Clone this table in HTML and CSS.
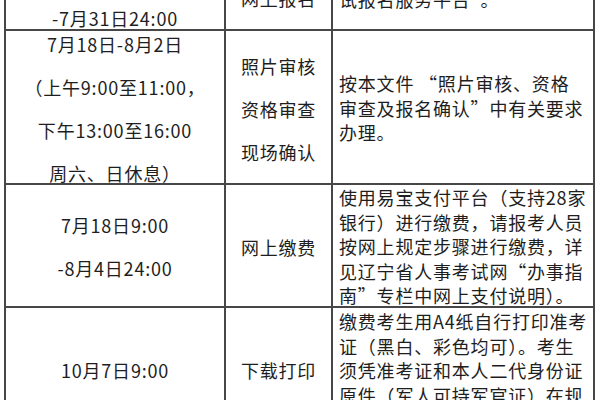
FILE: index.html
```html
<!DOCTYPE html>
<html lang="zh-CN">
<head>
<meta charset="utf-8">
<title>报名流程</title>
<link rel="stylesheet" href="styles.css">
</head>
<body>
<div class="sheet">
  <div class="cell c1 r1">
    <div class="ln43">7月18日9:00</div>
    <div class="ln43">-7月31日24:00</div>
  </div>
  <div class="cell c2 r1">
    <div class="ln43">网上报名</div>
  </div>
  <div class="cell c3 r1">
    <div class="ln25">请登录网站“辽宁省人事考<br>试报名服务平台”。</div>
  </div>

  <div class="cell c1 r2">
    <div class="ln43">7月18日-8月2日</div>
    <div class="ln43">（上午9:00至11:00，</div>
    <div class="ln43">下午13:00至16:00</div>
    <div class="ln43">周六、日休息）</div>
  </div>
  <div class="cell c2 r2">
    <div class="ln43">照片审核</div>
    <div class="ln43">资格审查</div>
    <div class="ln43">现场确认</div>
  </div>
  <div class="cell c3 r2">
    <div class="ln25">按本文件 “照片审核、资格<br>审查及报名确认”中有关要求<br>办理。</div>
  </div>

  <div class="cell c1 r3">
    <div class="ln43">7月18日9:00</div>
    <div class="ln43">-8月4日24:00</div>
  </div>
  <div class="cell c2 r3">
    <div class="ln43">网上缴费</div>
  </div>
  <div class="cell c3 r3">
    <div class="ln25">使用易宝支付平台（支持28家<br>银行）进行缴费，请报考人员<br>按网上规定步骤进行缴费，详<br>见辽宁省人事考试网“办事指<br>南”专栏中网上支付说明）。</div>
  </div>

  <div class="cell c1 r4">
    <div class="ln43">10月7日9:00</div>
  </div>
  <div class="cell c2 r4">
    <div class="ln43">下载打印</div>
  </div>
  <div class="cell c3 r4">
    <div class="ln25">缴费考生用A4纸自行打印准考<br>证（黑白、彩色均可）。考生<br>须凭准考证和本人二代身份证<br>原件（军人可持军官证）在规<br>定时间、地点参加考试。</div>
  </div>
</div>
</body>
</html>
```

FILE: styles.css
```css
html, body {
  margin: 0;
  padding: 0;
  background: #ffffff;
}

body {
  width: 600px;
  height: 400px;
  overflow: hidden;
  font-family: "Noto Sans CJK SC", "Noto Sans", sans-serif;
  font-size: 18px;
  letter-spacing: 0.8px;
  color: #1e1e1e;
}

.sheet {
  display: grid;
  grid-template-columns: 218px 105px 260px;
  grid-template-rows: 67px 152px 121px 124px;
  gap: 2px;
  padding: 2px;
  width: max-content;
  margin: -40px 0 0 4px;
  background: #474747;
}

.cell {
  background: #ffffff;
  display: flex;
  flex-direction: column;
  justify-content: center;
  min-height: 0;
  white-space: nowrap;
}

.c1, .c2 {
  align-items: center;
  text-align: center;
}

.c3 {
  padding-left: 6px;
  text-align: left;
}

.ln43 {
  line-height: 43px;
}

.ln25 {
  line-height: 24.5px;
}

.r1.c1 { padding-top: 2px; }
.r1.c2 { padding-top: 5px; }
.r1.c3 {
  justify-content: flex-end;
  padding-bottom: 18px;
}

.r2.c1 { padding-top: 3px; }
.r2.c2 { padding-top: 5px; }
.r2.c3 { padding-top: 2px; }

.r3.c1 { padding-top: 2px; }
.r3.c2 { padding-top: 3px; }
.r3.c3 {
  justify-content: flex-start;
  padding-top: 0;
}

.r4.c1, .r4.c2 { padding-top: 0; }
.r4.c3 {
  justify-content: flex-start;
  padding-top: 1px;
}
```
